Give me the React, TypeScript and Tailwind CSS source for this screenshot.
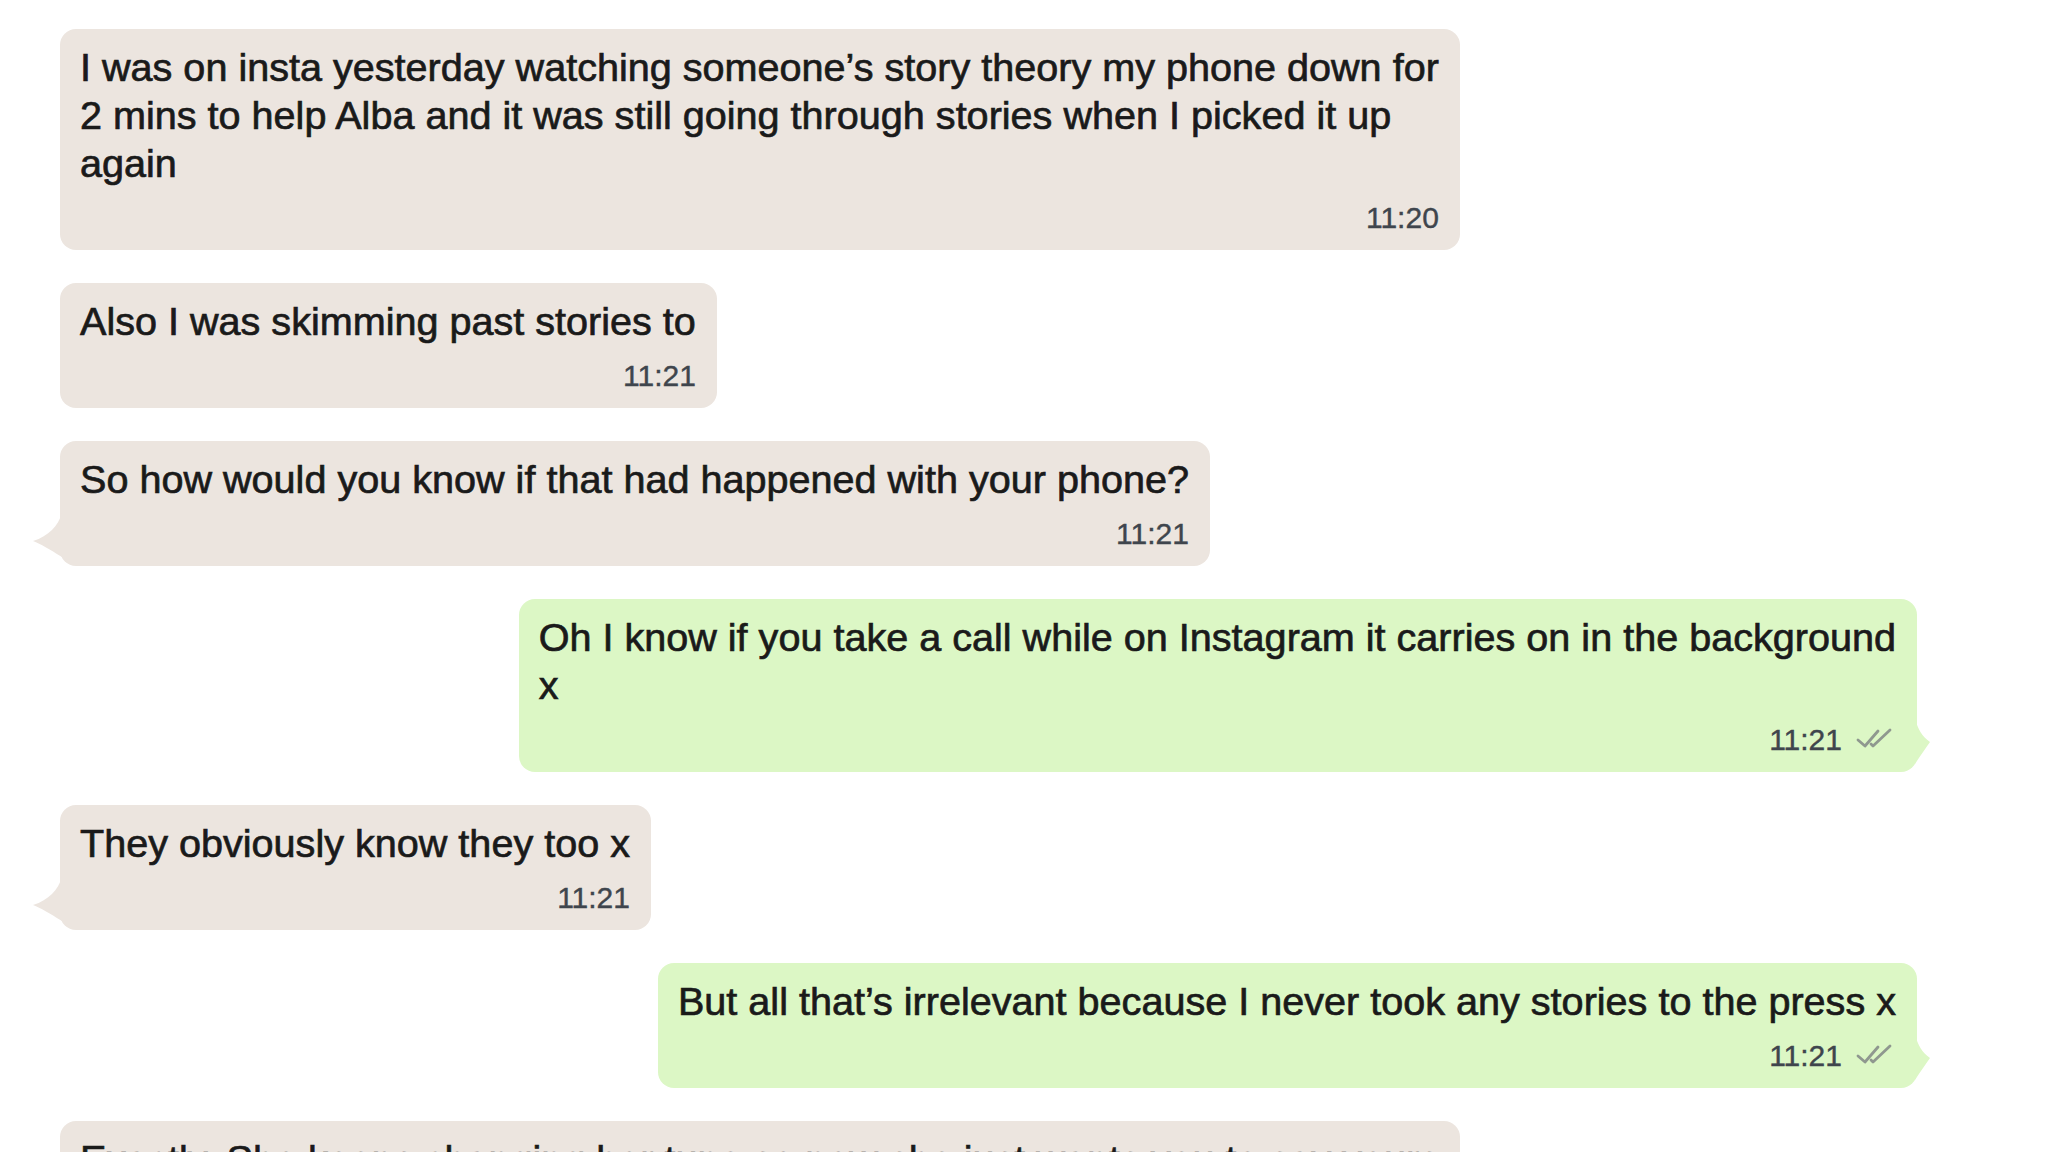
import React from "react"

type Msg = {
  out?: boolean
  lines: string[]
  time: string
  tail?: boolean
}

const messages: Msg[] = [
  {
    lines: [
      "I was on insta yesterday watching someone\u2019s story theory my phone down for",
      "2 mins to help Alba and it was still going through stories when I picked it up",
      "again",
    ],
    time: "11:20",
  },
  { lines: ["Also I was skimming past stories to"], time: "11:21" },
  { lines: ["So how would you know if that had happened with your phone?"], time: "11:21", tail: true },
  {
    out: true,
    lines: ["Oh I know if you take a call while on Instagram it carries on in the background", "x"],
    time: "11:21",
    tail: true,
  },
  { lines: ["They obviously know they too x"], time: "11:21", tail: true },
  {
    out: true,
    lines: ["But all that\u2019s irrelevant because I never took any stories to the press x"],
    time: "11:21",
    tail: true,
  },
  {
    lines: ["Exactly. She keeps changing her tune so now she just wants you to say yours", "weren\u2019t either"],
    time: "11:22",
  },
]

const Ticks = () => (
  <svg width="40" height="22" viewBox="0 0 40 22" fill="none" stroke="#8f988f" strokeWidth="2.8" strokeLinecap="round" strokeLinejoin="round">
    <path d="M2 12 L9 18 L22 3" />
    <path d="M15 16 L17 18 L34 2" />
  </svg>
)

const InTail = () => (
  <svg className="absolute left-[-29px] bottom-[9px]" width="32" height="44" viewBox="0 0 32 44">
    <path d="M31 0 C 27 13, 18 23, 2 28 C 10 31, 18 36, 31 44 Z" fill="#ece5df" />
  </svg>
)

const OutTail = () => (
  <svg className="absolute right-[-15px] bottom-[8px]" width="18" height="46" viewBox="0 0 18 46">
    <path d="M1 0 C 4 12, 8 18, 16 24 C 12 30, 6 38, 1 46 Z" fill="#dcf7c5" />
  </svg>
)

const Bubble = ({ m }: { m: Msg }) => {
  return (
    <div className={m.out ? "flex justify-end pr-[131px]" : "flex justify-start pl-[60px]"}>
      <div
        className={
          "relative w-fit rounded-[16px] pl-[20px] pr-[21px] pt-[14px] pb-[13px] " +
          (m.out ? "bg-[#dcf7c5]" : "bg-[#ece5df]")
        }
      >
        {m.tail && (m.out ? <OutTail /> : <InTail />)}
        <div className="whitespace-nowrap text-[39.6px] leading-[48px] text-[#1a1a1a] [-webkit-text-stroke:0.7px_#1a1a1a]">
          {m.lines.map((l, i) => (
            <div key={i}>{l}</div>
          ))}
        </div>
        <div className="mt-[10px] flex h-[40px] items-center justify-end gap-[14px] text-[30px] text-[#3f454d] [-webkit-text-stroke:0.4px_#3f454d]">
          <span>{m.time}</span>
          {m.out && <Ticks />}
        </div>
      </div>
    </div>
  )
}

export default function App() {
  return (
    <div
      className="h-screen w-full overflow-hidden bg-white pt-[29px]"
      style={{ fontFamily: '"Liberation Sans", Arial, sans-serif' }}
    >
      <div className="flex flex-col gap-[33px]">
        {messages.map((m, i) => (
          <Bubble key={i} m={m} />
        ))}
      </div>
    </div>
  )
}
